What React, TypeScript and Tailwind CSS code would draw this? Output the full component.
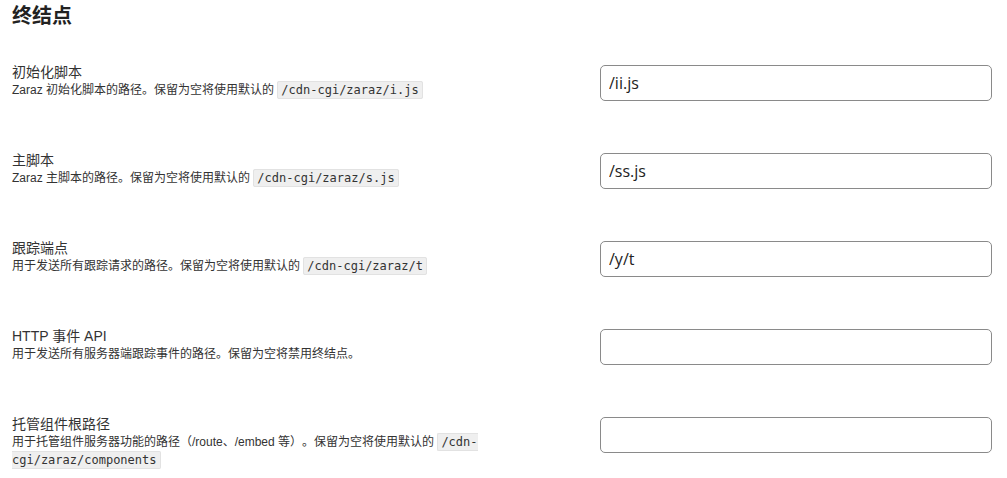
import React from 'react';

const SANS = '"Segoe UI", "Open Sans", "Noto Sans CJK SC", sans-serif';
const CJK = 'Arial, "Liberation Sans", "Noto Sans CJK SC", sans-serif';

interface Field {
  label: string;
  desc: React.ReactNode;
  value: string;
}

function Code({ children }: { children: React.ReactNode }) {
  return (
    <code className="bg-[#efefef] border border-[#e2e2e2] rounded-[2px] px-[3px] py-[1px] text-[12px] text-[#333] font-['DejaVu_Sans_Mono',monospace]">
      {children}
    </code>
  );
}

const FIELDS: Field[] = [
  {
    label: '初始化脚本',
    desc: <>Zaraz 初始化脚本的路径。保留为空将使用默认的 <Code>/cdn-cgi/zaraz/i.js</Code></>,
    value: '/ii.js',
  },
  {
    label: '主脚本',
    desc: <>Zaraz 主脚本的路径。保留为空将使用默认的 <Code>/cdn-cgi/zaraz/s.js</Code></>,
    value: '/ss.js',
  },
  {
    label: '跟踪端点',
    desc: <>用于发送所有跟踪请求的路径。保留为空将使用默认的 <Code>/cdn-cgi/zaraz/t</Code></>,
    value: '/y/t',
  },
  {
    label: 'HTTP 事件 API',
    desc: <>用于发送所有服务器端跟踪事件的路径。保留为空将禁用终结点。</>,
    value: '',
  },
  {
    label: '托管组件根路径',
    desc: <>用于托管组件服务器功能的路径（/route、/embed 等）。保留为空将使用默认的 <Code>/cdn-cgi/zaraz/components</Code></>,
    value: '',
  },
];

export default function App() {
  return (
    <div className="w-[1007px] h-[478px] bg-white overflow-hidden pl-[12px] pr-[15px] pt-[2px] [text-spacing-trim:space-all]" style={{ fontFamily: CJK }}>
      <h2 className="text-[20px] leading-[28px] font-bold text-[#222]">终结点</h2>
      <div className="mt-[33px] flex flex-col">
        {FIELDS.map(f => (
          <div key={f.label} className="h-[88px] flex justify-between items-start">
            <div className="w-[482px] text-[#333]">
              <div className="text-[14px] leading-[18px]">{f.label}</div>
              <div className="text-[12px] leading-[18px]">{f.desc}</div>
            </div>
            <input
              readOnly
              value={f.value}
              className="mt-[2px] w-[392px] h-[36px] rounded-[5px] border border-[#8a8a8a] px-[8px] text-[16px] text-[#222] outline-none"
              style={{ fontFamily: SANS }}
            />
          </div>
        ))}
      </div>
    </div>
  );
}
